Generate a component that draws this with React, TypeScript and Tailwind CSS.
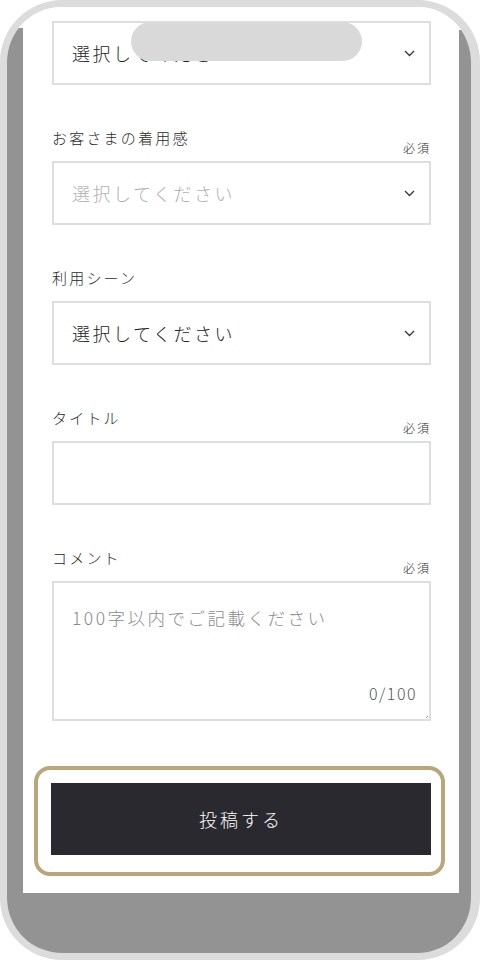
import React from "react";

const jp = { fontFamily: '"Noto Sans CJK JP", "Noto Sans", sans-serif' };

function Chevron() {
  return (
    <svg width="11" height="7" viewBox="0 0 11 7" className="shrink-0">
      <polyline points="1,1 5.5,5.5 10,1" fill="none" stroke="#333" strokeWidth="1.3" />
    </svg>
  );
}

function LabelRow({ label, required }: { label: string; required?: boolean }) {
  return (
    <div className="flex justify-between h-[30px] mb-[4px]">
      <span className="self-start text-[15px] leading-[22px] tracking-[2.2px] text-[#2a2a2a]">{label}</span>
      {required && (
        <span className="self-end text-[12px] leading-[18px] tracking-[2px] text-[#2a2a2a]">必須</span>
      )}
    </div>
  );
}

function Select({ placeholder }: { placeholder?: boolean }) {
  return (
    <div className="h-[64px] border-2 border-[#dedede] flex items-center justify-between pl-[18px] pr-[14px]">
      <span
        className={
          "text-[18px] tracking-[2.5px] " + (placeholder ? "text-[#b0b0b0]" : "text-[#222222]")
        }
      >
        選択してください
      </span>
      <Chevron />
    </div>
  );
}

export default function App() {
  return (
    <div className="w-[480px] h-[960px] bg-white font-light" style={jp}>
      <div className="relative w-[480px] h-[960px] rounded-[62px] border-[#dcdcdc] border-t-[7px] border-l-[7px] border-r-[9px] border-b-[7px] overflow-hidden bg-white flex flex-col">
        <div className="flex flex-1">
          <div className="w-[16px] mt-[21px] bg-[#939393]" />
          <div className="w-[436px] bg-white pt-[14px] pl-[29px] pr-[28px] pb-[17px] flex flex-col">
            <Select />
            <div className="mt-[42px]">
              <LabelRow label="お客さまの着用感" required />
              <Select placeholder />
            </div>
            <div className="mt-[42px]">
              <LabelRow label="利用シーン" />
              <Select />
            </div>
            <div className="mt-[42px]">
              <LabelRow label="タイトル" required />
              <div className="h-[64px] border-2 border-[#dedede]" />
            </div>
            <div className="mt-[42px]">
              <LabelRow label="コメント" required />
              <div className="relative h-[140px] border-2 border-[#dedede] flex flex-col justify-between pl-[18px] pr-[12px] pt-[22px] pb-[14px]">
                <span className="text-[17.5px] leading-[26px] tracking-[2.5px] text-[#8a8a8a]">
                  100字以内でご記載ください
                </span>
                <span className="self-end text-[16px] leading-[24px] tracking-[1.5px] text-[#555555]">0/100</span>
                <svg width="4" height="4" viewBox="0 0 4 4" className="absolute right-[0px] bottom-[0px]">
                  <path d="M3 1 L1 3" stroke="#999" strokeWidth="1" />
                </svg>
              </div>
            </div>
            <div className="mt-[45px] -ml-[18px] w-[411px] h-[110px] rounded-[16px] border-4 border-[#b9a77b] pl-[13px] pr-[10px] pt-[13px] pb-[17px]">
              <div className="h-full bg-[#2a292f] flex items-center justify-center">
                <span className="text-white text-[18px] tracking-[3px]">投稿する</span>
              </div>
            </div>
          </div>
          <div className="w-[12px] mt-[23px] bg-[#939393]" />
        </div>
        <div className="h-[60px] bg-[#939393]" />
        <div className="absolute left-[124px] top-[15px] w-[231px] h-[39px] rounded-full bg-[#d9d9d9]" />
      </div>
    </div>
  );
}
